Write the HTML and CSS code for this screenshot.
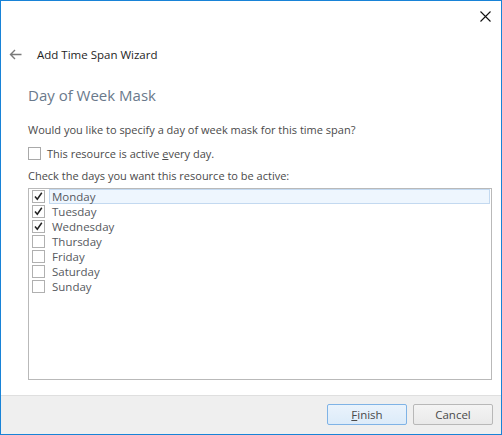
FILE: index.html
```html
<!DOCTYPE html>
<html>
<head>
<meta charset="utf-8">
<link rel="stylesheet" href="styles.css">
</head>
<body>
<div class="window">
  <div class="titlebar">
    <span class="close" aria-label="Close">
      <svg width="11" height="11" viewBox="0 0 11 11"><path d="M0.5 0.5 L10.5 10.5 M10.5 0.5 L0.5 10.5" stroke="#111" stroke-width="1.1" fill="none"/></svg>
    </span>
  </div>
  <div class="header">
    <span class="back">
      <svg width="13" height="11" viewBox="0 0 13 11"><path d="M12.5 5.5 H1.5 M6 1 L1.5 5.5 L6 10" stroke="#7a7a7a" stroke-width="1.4" fill="none"/></svg>
    </span>
    <span class="wizard-title">Add Time Span Wizard</span>
  </div>
  <div class="content">
    <div class="page-title">Day of Week Mask</div>
    <div class="text">Would you like to specify a day of week mask for this time span?</div>
    <label class="check-row">
      <span class="box"></span>
      <span>This resource is active <u>e</u>very day.</span>
    </label>
    <div class="text">Check the days you want this resource to be active:</div>
    <div class="listbox">
      <div class="item"><span class="box checked"><svg width="11" height="11" viewBox="0 0 11 11"><path d="M2 5.5 L4.3 8.3 L8.8 1.8" stroke="#222" stroke-width="1.5" fill="none"/></svg></span><span class="label focused">Monday</span></div>
      <div class="item"><span class="box checked"><svg width="11" height="11" viewBox="0 0 11 11"><path d="M2 5.5 L4.3 8.3 L8.8 1.8" stroke="#222" stroke-width="1.5" fill="none"/></svg></span><span class="label">Tuesday</span></div>
      <div class="item"><span class="box checked"><svg width="11" height="11" viewBox="0 0 11 11"><path d="M2 5.5 L4.3 8.3 L8.8 1.8" stroke="#222" stroke-width="1.5" fill="none"/></svg></span><span class="label">Wednesday</span></div>
      <div class="item"><span class="box"></span><span class="label">Thursday</span></div>
      <div class="item"><span class="box"></span><span class="label">Friday</span></div>
      <div class="item"><span class="box"></span><span class="label">Saturday</span></div>
      <div class="item"><span class="box"></span><span class="label">Sunday</span></div>
    </div>
  </div>
  <div class="footer">
    <button class="btn default"><u>F</u>inish</button>
    <button class="btn">Cancel</button>
  </div>
</div>
</body>
</html>
```
FILE: styles.css
```css
html, body {
  margin: 0;
  padding: 0;
  background: #fff;
}
body {
  font-family: "Open Sans", "Noto Sans", sans-serif;
  font-size: 11px;
  color: #4a4a4a;
}
.window {
  box-sizing: border-box;
  width: 502px;
  height: 435px;
  border: 1px solid #1883d7;
  display: flex;
  flex-direction: column;
  background: #fff;
}
.titlebar {
  height: 30px;
  display: flex;
  justify-content: flex-end;
  align-items: center;
}
.close {
  width: 11px;
  height: 11px;
  margin-right: 10px;
  display: flex;
}
.header {
  margin-top: 13px;
  height: 20px;
  display: flex;
  align-items: center;
}
.back {
  display: flex;
  margin-left: 8px;
  width: 13px;
  height: 11px;
}
.wizard-title {
  margin-left: 15px;
  color: #1e1e1e;
  font-size: 11.5px;
}
.content {
  padding: 0 9px 0 27px;
  display: flex;
  flex-direction: column;
}
.page-title {
  margin-top: 21px;
  font-size: 15px;
  line-height: 20px;
  color: #6a798b;
}
.text {
  margin-top: 17px;
  line-height: 16px;
  height: 16px;
}
.check-row {
  margin-top: 7px;
  display: flex;
  align-items: center;
  height: 17px;
}
.check-row .box {
  margin-right: 6px;
}
.check-row + .text {
  margin-top: 6px;
}
.box {
  box-sizing: border-box;
  width: 13px;
  height: 13px;
  border: 1px solid #a9a9a9;
  background: #fff;
  display: inline-flex;
  align-items: center;
  justify-content: center;
  flex: none;
}
.listbox {
  margin-top: 4px;
  box-sizing: border-box;
  height: 192px;
  border: 1px solid #b9b9b9;
  padding: 0 1px 0 3px;
}
.item {
  display: flex;
  align-items: center;
  height: 15px;
}
.item .box {
  border-color: #b0b0b0;
}
.label {
  margin-left: 4px;
  padding-left: 2px;
  line-height: 13px;
  height: 13px;
  color: #56595e;
  border: 1px solid transparent;
  flex: 1;
  font-size: 11.5px;
}
.label.focused {
  background: #eef6fe;
  border-color: #c3d9f0;
}
.footer {
  margin-top: auto;
  box-sizing: border-box;
  height: 39px;
  border-top: 1px solid #dfdfdf;
  background: #efefef;
  display: flex;
  justify-content: flex-end;
  align-items: flex-start;
  gap: 6px;
  padding: 8px 8px 0 0;
}
.btn {
  box-sizing: border-box;
  width: 80px;
  height: 21px;
  font-family: inherit;
  font-size: 11.5px;
  color: #4a4a4a;
  border: 1px solid #b8b8b8;
  border-radius: 2px;
  background: linear-gradient(#f4f4f4, #e9e9e9);
  padding: 0;
}
.btn.default {
  border-color: #7fb3e6;
  background: linear-gradient(#eaf3fc, #dcebf9);
}
```
